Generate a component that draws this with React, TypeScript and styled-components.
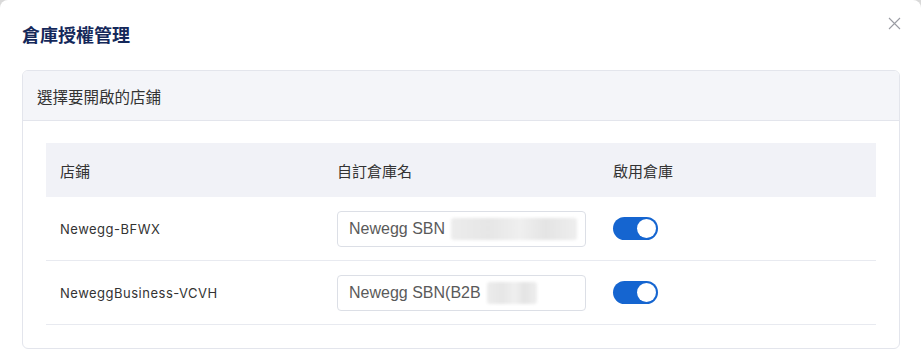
import React, { useState } from 'react';
import styled, { createGlobalStyle } from 'styled-components';

const GlobalStyle = createGlobalStyle`
  html, body {
    margin: 0;
    padding: 0;
    background: #d9d9d9;
  }
  * { box-sizing: border-box; }
`;

const Modal = styled.div`
  width: 921px;
  height: 356px;
  background: #ffffff;
  border-radius: 8px 8px 0 0;
  position: relative;
  padding: 22px 21px 0 22px;
  font-family: 'Noto Sans CJK TC', 'Noto Sans', sans-serif;
  color: #333;
`;

const Title = styled.h2`
  margin: 0;
  font-size: 18px;
  line-height: 24px;
  font-weight: 700;
  color: #14285a;
`;

const CloseButton = styled.button`
  position: absolute;
  top: 14px;
  right: 18px;
  width: 18px;
  height: 18px;
  padding: 0;
  border: none;
  background: none;
  cursor: pointer;
  display: flex;
  align-items: center;
  justify-content: center;
`;

const Card = styled.section`
  margin-top: 24px;
  width: 878px;
  border: 1px solid #e3e5ec;
  border-radius: 6px;
  overflow: hidden;
`;

const CardHeader = styled.div`
  height: 50px;
  display: flex;
  align-items: center;
  padding-left: 14px;
  background: #f4f5f9;
  border-bottom: 1px solid #e3e5ec;
  font-size: 15.5px;
  color: #333;
`;

const CardBody = styled.div`
  padding: 22px 23px 23px 23px;
`;

const Table = styled.div`
  display: grid;
  grid-template-columns: 277px 276px 1fr;
`;

const HeadCell = styled.div`
  height: 54px;
  display: flex;
  align-items: center;
  padding-left: 14px;
  background: #f1f2f7;
  font-size: 15px;
  color: #333;
`;

const Cell = styled.div`
  height: 64px;
  display: flex;
  align-items: center;
  padding-left: 14px;
  border-bottom: 1px solid #e8eaf0;
  font-family: 'Inter', 'Noto Sans', sans-serif;
  font-size: 13px;
  color: #333;
  letter-spacing: 0.5px;
`;

const NameInput = styled.div`
  width: 249px;
  height: 36px;
  border: 1px solid #dcdfe6;
  border-radius: 4px;
  display: flex;
  align-items: center;
  padding-left: 11px;
  font-family: 'Liberation Sans', Arial, sans-serif;
  font-size: 16px;
  color: #5a5a5a;
  letter-spacing: 0;
  overflow: hidden;
  white-space: nowrap;
`;

const Redacted = styled.span<{ $w: number }>`
  display: inline-block;
  height: 22px;
  margin-left: 6px;
  width: ${({ $w }) => $w}px;
  background: linear-gradient(90deg, #ececec 0%, #e6e6e6 30%, #efefef 55%, #e4e4e4 75%, #eeeeee 100%);
  filter: blur(1.5px);
  border-radius: 3px;
`;

const Track = styled.button<{ $on: boolean }>`
  width: 45px;
  height: 23px;
  border-radius: 12px;
  border: none;
  padding: 0;
  background: ${({ $on }) => ($on ? '#1565d0' : '#c9ccd4')};
  position: relative;
  cursor: pointer;
`;

const Knob = styled.span<{ $on: boolean }>`
  position: absolute;
  top: 2px;
  left: ${({ $on }) => ($on ? '24px' : '2px')};
  width: 19px;
  height: 19px;
  border-radius: 50%;
  background: #fff;
  transition: left 0.2s;
`;

const Toggle: React.FC<{ initial: boolean }> = ({ initial }) => {
  const [on, setOn] = useState(initial);
  return (
    <Track $on={on} onClick={() => setOn(!on)}>
      <Knob $on={on} />
    </Track>
  );
};

const rows = [
  { store: 'Newegg-BFWX', name: 'Newegg SBN', hidden: 126 },
  { store: 'NeweggBusiness-VCVH', name: 'Newegg SBN(B2B', hidden: 50 },
];

const App: React.FC = () => (
  <>
    <GlobalStyle />
    <Modal>
      <Title>倉庫授權管理</Title>
      <CloseButton aria-label="close">
        <svg width="13" height="13" viewBox="0 0 13 13">
          <path d="M1 1L12 12M12 1L1 12" stroke="#9a9ca3" strokeWidth="1.1" />
        </svg>
      </CloseButton>
      <Card>
        <CardHeader>選擇要開啟的店鋪</CardHeader>
        <CardBody>
          <Table>
            <HeadCell>店鋪</HeadCell>
            <HeadCell>自訂倉庫名</HeadCell>
            <HeadCell>啟用倉庫</HeadCell>
            {rows.map((r) => (
              <React.Fragment key={r.store}>
                <Cell>{r.store}</Cell>
                <Cell>
                  <NameInput>
                    {r.name}
                    <Redacted $w={r.hidden} />
                  </NameInput>
                </Cell>
                <Cell>
                  <Toggle initial />
                </Cell>
              </React.Fragment>
            ))}
          </Table>
        </CardBody>
      </Card>
    </Modal>
  </>
);

export default App;
